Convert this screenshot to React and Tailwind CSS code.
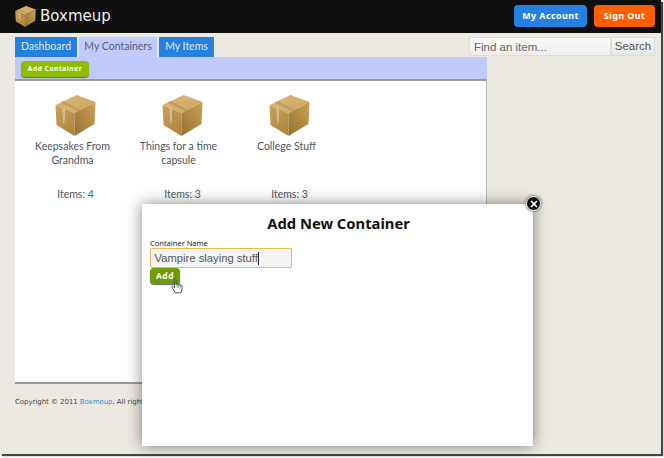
import { X } from 'lucide-react';

const containers = [
    { name: 'Keepsakes From Grandma', items: 4, nameClass: 'mr-[6px]' },
    { name: 'Things for a time capsule', items: 3, nameClass: 'mr-[8px]' },
    { name: 'College Stuff', items: 3, nameClass: 'mr-[6px]' },
];

function BoxIcon({ id, className }) {
    return (
        <svg viewBox="0 0 40 41" className={className}>
            <defs>
                <linearGradient id={`${id}-top`} x1="0" y1="0" x2="1" y2="1">
                    <stop offset="0" stopColor="#dcb877" />
                    <stop offset="1" stopColor="#cda45e" />
                </linearGradient>
                <linearGradient id={`${id}-left`} x1="0" y1="0" x2="0.6" y2="1">
                    <stop offset="0" stopColor="#cba35d" />
                    <stop offset="1" stopColor="#b0863f" />
                </linearGradient>
                <linearGradient id={`${id}-right`} x1="0" y1="1" x2="1" y2="0">
                    <stop offset="0" stopColor="#96702f" />
                    <stop offset="1" stopColor="#cba257" />
                </linearGradient>
            </defs>
            <path d="M0 10 L21 0 L40 7 L19 18 Z" fill={`url(#${id}-top)`} />
            <path d="M0 10 L19 18 L19 41 L1 30 Z" fill={`url(#${id}-left)`} />
            <path d="M19 18 L40 7 L39 29 L19 41 Z" fill={`url(#${id}-right)`} />
            <path d="M5 7.6 L24 16.2 L25.5 15.4 L8 6 Z" fill="#a98850" opacity="0.55" />
            <path d="M7 12.6 L9 13.6 L9.2 24 L8.4 29 L7.6 27 Z" fill="#ddd2bb" />
            <path d="M8 13.6 L8.2 27" stroke="#8f8468" strokeWidth="0.5" strokeDasharray="1 0.6" />
        </svg>
    );
}

function HandCursor() {
    return (
        <svg viewBox="0 0 14 18" className="absolute left-[171px] top-[278px] w-[12px] h-[16px]">
            <path
                d="M4 1.2 C4 .4 5.6 .4 5.6 1.2 L5.6 7 L7.2 6.6 L9 7 L10.8 7.6 L12.4 8.4 C13 9 13 10 13 11 L12.4 15 L11.6 17 L5 17 L3.6 14.6 L1 10.6 C.6 9.6 1.6 9 2.4 9.6 L4 11.2 Z"
                fill="#fff"
                stroke="#222"
                strokeWidth="0.9"
                strokeLinejoin="round"
            />
            <path d="M7.2 7 V11 M9 7.2 V11 M10.8 7.8 V11" stroke="#222" strokeWidth="0.6" />
        </svg>
    );
}

export default function App() {
    return (
        <div className="relative w-[664px] h-[458px] overflow-hidden bg-white font-['Lato',sans-serif]">
            <div className="w-[661px] h-[454px] bg-[#ece9e1] shadow-[2px_2px_1px_#444]">
                <header className="h-[33px] bg-[#0f0f0f] flex items-center justify-between pl-[15px] pr-[6px]">
                    <div className="flex items-center gap-[4px]">
                        <BoxIcon id="logo" className="w-[21px] h-[21px]" />
                        <span className="text-[15px] font-['DejaVu_Sans',sans-serif] text-[#eeeeee] mt-[-1px]">Boxmeup</span>
                    </div>
                    <div className="flex gap-[7px] mt-[-1px]">
                        <button className="w-[73px] h-[22px] rounded-[4px] bg-[#2680e0] text-white text-[9px] font-bold tracking-[0.4px] font-['Noto_Sans',sans-serif]">My Account</button>
                        <button className="w-[61px] h-[22px] rounded-[4px] bg-[#ff5f00] text-white text-[9px] font-bold tracking-[0.4px] font-['Noto_Sans',sans-serif]">Sign Out</button>
                    </div>
                </header>
                <div className="flex justify-between items-start pl-[15px] pr-[6px] mt-[4px]">
                    <nav className="flex gap-[2px] h-[20px] text-[10.5px]">
                        <a className="w-[62px] flex items-center justify-center bg-[#2680e0] text-[#dce9f9]">Dashboard</a>
                        <a className="w-[78px] flex items-center justify-center bg-[#c0caff] text-[#5a5f70]">My Containers</a>
                        <a className="w-[55px] flex items-center justify-center bg-[#2680e0] text-[#dce9f9]">My Items</a>
                    </nav>
                    <form className="flex">
                        <input readOnly placeholder="Find an item..." className="w-[142px] h-[19px] px-[4px] bg-linear-to-b from-[#fafafa] to-[#eeeeee] border border-[#dddddd] text-[11.5px] font-['Liberation_Sans',sans-serif] placeholder:text-[#666]" />
                        <button type="button" className="w-[44px] h-[19px] bg-linear-to-b from-[#f6f6f6] to-[#e8e8e8] border border-[#dddddd] text-[11.5px] text-[#555] font-['Liberation_Sans',sans-serif]">Search</button>
                    </form>
                </div>
                <div className="w-[472px] ml-[15px]">
                    <div className="h-[24px] bg-[#c0caff] border-b-2 border-[#999] pl-[6px] pt-[4px]">
                        <button className="block w-[68px] h-[16px] rounded-[4px] bg-[#8fbc00] text-white text-[6.5px] font-bold tracking-[0.6px] shadow-[0_1px_1px_#666] font-['Noto_Sans',sans-serif]">Add Container</button>
                    </div>
                    <div className="h-[303px] bg-white border-r border-[#bbb] border-b-2 border-b-[#999] pl-[7px] pt-[14px] flex">
                        {containers.map((c, i) => (
                            <div key={c.name} className="w-[107px] flex flex-col items-center text-[10.5px] leading-[14px] text-[#4f5560]">
                                <BoxIcon id={`box-${i}`} className="w-[41px] h-[41px]" />
                                <p className={`mt-[3px] h-[42px] w-[84px] text-center ${c.nameClass}`}>{c.name}</p>
                                <p className="mt-[6px]">Items: <span className={i === 0 ? 'text-[#2a6f8f]' : ''}>{c.items}</span></p>
                            </div>
                        ))}
                    </div>
                    <footer className="mt-[13px] text-[7px] tracking-[-0.05px] text-[#444] font-['DejaVu_Sans',sans-serif]">
                        Copyright © 2011 <a className="text-[#3c8ade]">Boxmeup</a>. All rights reserved.
                    </footer>
                </div>
            </div>

            {/* modal */}
            <div className="absolute left-[142px] top-[204px] w-[391px] h-[242px] bg-white shadow-[0_0_14px_rgba(50,50,40,0.6)] px-[8px]">
                <h2 className="mt-[9px] ml-[2px] text-center text-[14.75px] leading-[20px] font-bold text-[#111] font-['Noto_Sans',sans-serif]">Add New Container</h2>
                <label className="block mt-[6px] text-[7.5px] leading-[9px] text-[#222] font-['Noto_Sans',sans-serif]">Container Name</label>
                <div className="w-[142px] h-[20px] border border-[#eeb55a] rounded-[2px] bg-[#f5f5f5] px-[3.5px] text-[11.25px] leading-[18px] text-[#555] font-['Liberation_Sans',sans-serif] flex items-center">
                    Vampire slaying stuff<span className="inline-block w-px h-[13px] bg-[#222]" />
                </div>
                <button className="block w-[30px] h-[16px] rounded-[4px] bg-[#6f9c00] text-white text-[8.5px] font-bold tracking-[0.4px] shadow-[0_1px_1px_#666] font-['Noto_Sans',sans-serif]">Add</button>
            </div>
            <HandCursor />
            <button className="absolute left-[526px] top-[196px] w-[15px] h-[15px] rounded-full bg-[#111] border border-white shadow-[0_0_3px_#333] flex items-center justify-center">
                <X size={10} strokeWidth={4} className="text-white" />
            </button>
        </div>
    );
}
